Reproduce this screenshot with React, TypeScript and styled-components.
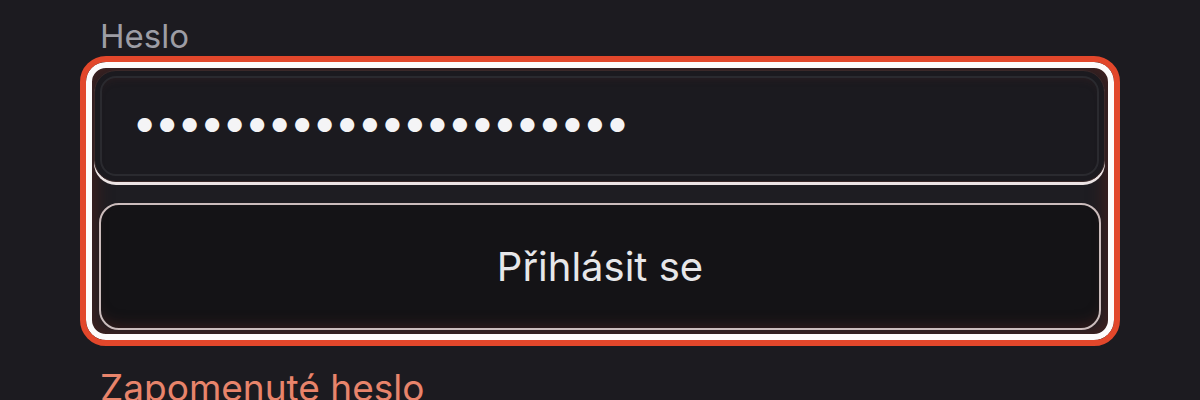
import React from 'react'
import styled, {createGlobalStyle} from 'styled-components'

const GlobalStyle = createGlobalStyle`
    html, body{
        margin:0;
        padding:0;
        background:#1c1b20;
    }
    body{
        font-family:Inter, "Noto Sans", sans-serif;
        overflow:hidden;
    }
`

const App:React.FC = ()=>{
    return (
        <Page>
            <GlobalStyle/>
            <Label htmlFor="heslo">Heslo</Label>
            <Highlight>
                <PasswordInput id="heslo" type="password" readOnly value="abcdefghijklmnopqrstuv"/>
                <SubmitButton>Přihlásit se</SubmitButton>
            </Highlight>
            <ForgotLink href="#">Zapomenuté heslo</ForgotLink>
        </Page>
    )
}

const Page = styled.main`
    display:flex;
    flex-direction:column;
    align-items:flex-start;
    padding:16px 80px 0;
    width:1040px;
`

const Label = styled.label`
    display:block;
    margin-left:20px;
    font-size:33px;
    line-height:40px;
    color:#9d9da4;
`

const Highlight = styled.div`
    box-sizing:border-box;
    width:1040px;
    height:290px;
    display:flex;
    flex-direction:column;
    padding:8px 9px 10px 8px;
    border:6px solid #e2472b;
    border-radius:26px;
    background:#1e1d22;
    box-shadow:inset 0 0 0 6px #fdfbfb,
               inset 0 0 18px 8px rgba(105,38,30,0.55);
`

const PasswordInput = styled.input`
    box-sizing:border-box;
    height:112px;
    width:100%;
    padding:0 0 10px 37px;
    border:1px solid #3a2828;
    border-radius:22px;
    background:#1b1a1f;
    color:#f4f4f6;
    font-family:Inter, sans-serif;
    font-size:45px;
    letter-spacing:-2.8px;
    outline:none;
    box-shadow:0 3px 0 #ece4e4,
               inset 0 0 0 5px #1b1a1f,
               inset 0 0 0 7px #2a2a2f,
               inset 0 6px 10px rgba(90,40,40,0.35);
`

const SubmitButton = styled.button`
    box-sizing:border-box;
    height:127px;
    margin:21px 4px 0 5px;
    border:2px solid #cbbcbc;
    border-radius:20px;
    background:#141316;
    color:#e7e7e9;
    font-family:Inter, sans-serif;
    font-size:40px;
    cursor:pointer;
    box-shadow:inset 0 -10px 14px -8px rgba(90,40,35,0.5);
`

const ForgotLink = styled.a`
    margin:20px 0 0 20px;
    font-size:37px;
    line-height:44px;
    color:#e8846b;
    text-decoration:none;
`

export default App
